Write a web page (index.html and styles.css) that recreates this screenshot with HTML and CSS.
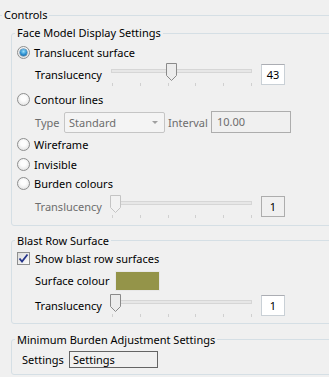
FILE: index.html
```html
<!DOCTYPE html>
<html>
<head>
  <title>Controls</title>
  <meta charset="UTF-8">
  <meta name="viewport" content="width=device-width, initial-scale=1">
  <link rel="stylesheet" href="styles.css">
</head>
<body>
  <fieldset class="group outer">
    <legend>Controls</legend>

    <fieldset class="group face">
      <legend>Face Model Display Settings</legend>

      <div class="opt first"><span class="radio on"></span>Translucent surface</div>
      <div class="slide-row">
        <span class="lbl w-slide">Translucency</span>
        <div class="slider">
          <div class="track"></div>
          <div class="ticks"><i></i><i></i><i></i><i></i><i></i><i></i></div>
          <svg class="thumb" style="left: 55px" width="12" height="19" viewBox="0 0 12 19"><path d="M0.5 0.5H10.5V12.5L5.5 17.5L0.5 12.5Z" fill="#ececec" stroke="#8a8a8a"/></svg>
        </div>
        <span class="num">43</span>
      </div>

      <div class="opt gap"><span class="radio"></span>Contour lines</div>
      <div class="type-row">
        <span class="lbl off w-type">Type</span>
        <div class="combo">Standard<span class="arrow"></span></div>
        <span class="off w-int">Interval</span>
        <span class="field off">10.00</span>
      </div>

      <div class="opt tight after-type"><span class="radio"></span>Wireframe</div>
      <div class="opt tight"><span class="radio"></span>Invisible</div>
      <div class="opt tight"><span class="radio"></span>Burden colours</div>
      <div class="slide-row">
        <span class="lbl off w-slide">Translucency</span>
        <div class="slider">
          <div class="track"></div>
          <div class="ticks"><i></i><i></i><i></i><i></i><i></i><i></i></div>
          <svg class="thumb" style="left: -1px" width="12" height="19" viewBox="0 0 12 19"><path d="M0.5 0.5H10.5V12.5L5.5 17.5L0.5 12.5Z" fill="#f2f2f2" stroke="#c4c4c4"/></svg>
        </div>
        <span class="num off">1</span>
      </div>
    </fieldset>

    <fieldset class="group blast">
      <legend>Blast Row Surface</legend>
      <div class="opt first">
        <span class="check"><svg width="11" height="11" viewBox="0 0 11 11"><path d="M1.5 5.5L4 8.5L9.5 1.5" fill="none" stroke="#25348a" stroke-width="1.8"/></svg></span>
        Show blast row surfaces
      </div>
      <div class="colour-row">
        <span class="lbl w-colour">Surface colour</span>
        <span class="swatch"></span>
      </div>
      <div class="slide-row">
        <span class="lbl w-slide">Translucency</span>
        <div class="slider">
          <div class="track"></div>
          <div class="ticks"><i></i><i></i><i></i><i></i><i></i><i></i></div>
          <svg class="thumb" style="left: -1px" width="12" height="19" viewBox="0 0 12 19"><path d="M0.5 0.5H10.5V12.5L5.5 17.5L0.5 12.5Z" fill="#ececec" stroke="#8a8a8a"/></svg>
        </div>
        <span class="num">1</span>
      </div>
    </fieldset>

    <fieldset class="group burden">
      <legend>Minimum Burden Adjustment Settings</legend>
      <div class="settings-row">
        <span class="lbl w-set">Settings</span>
        <span class="plain">Settings</span>
      </div>
    </fieldset>
  </fieldset>
</body>
</html>
```

FILE: styles.css
```css
html, body {
  margin: 0;
  overflow: hidden;
}
body {
  font-family: "Noto Sans", Arial, sans-serif;
  font-size: 11px;
  color: #000;
  background: #f0f0f0;
  width: 329px;
  height: 377px;
}
.group {
  border: 1px solid #d5dfe5;
  border-radius: 3px;
  min-width: 0;
}
.group legend {
  line-height: 14px;
  padding: 0 2px;
}
.outer {
  margin: 8px -20px 0 -3px;
  padding: 4px 0 12px 13px;
}
.outer > legend {
  margin-left: -9px;
}
.face, .blast, .burden {
  margin: 0 -20px 0 0;
  padding: 0 0 7px 5px;
}
.face > legend, .blast > legend, .burden > legend {
  margin-left: -2px;
}
.blast {
  margin-top: 8px;
  padding-bottom: 6px;
}
.burden {
  margin-top: 9px;
  padding-bottom: 5px;
}

.opt {
  display: flex;
  align-items: center;
  height: 19px;
  white-space: nowrap;
}
.opt.first {
  margin-top: 3px;
}
.blast .opt.first {
  margin-top: 1px;
}
.opt.gap {
  margin-top: 4px;
}
.opt.tight {
  height: 19.5px;
}
.opt.after-type {
  margin-top: 2px;
}
.radio {
  width: 13px;
  height: 13px;
  box-sizing: border-box;
  border-radius: 50%;
  border: 1px solid #8e8f8f;
  background: radial-gradient(circle at 50% 40%, #fdfdfd 30%, #d9d9d9 100%);
  margin-right: 4px;
  position: relative;
  flex: none;
}
.radio.on::after {
  content: "";
  position: absolute;
  left: 2px;
  top: 2px;
  width: 7px;
  height: 7px;
  border-radius: 50%;
  background: radial-gradient(circle at 50% 35%, #9be0fb 0%, #2b8fd0 55%, #0c4c82 100%);
  box-shadow: 0 0 0 0.5px #3a6d92;
}
.check {
  width: 13px;
  height: 13px;
  box-sizing: border-box;
  border: 1px solid #8e8f8f;
  background: linear-gradient(135deg, #dcdcdc, #fbfbfb);
  margin-right: 5px;
  display: flex;
  align-items: center;
  justify-content: center;
  flex: none;
}

.lbl {
  flex: none;
  padding-left: 18px;
  box-sizing: border-box;
  white-space: nowrap;
}
.off {
  color: #6d6d6d;
}
.w-slide { width: 94px; }
.w-type { width: 47px; }
.w-colour { width: 98px; }
.w-int { width: 43px; flex: none; white-space: nowrap; }
.w-set { width: 52px; padding-left: 5px; }

.slide-row {
  display: flex;
  align-items: flex-start;
  height: 22px;
  margin-top: 2px;
}
.blast .slide-row {
  margin-top: 3px;
}
.slide-row .lbl {
  line-height: 22px;
}
.slider {
  position: relative;
  width: 141px;
  height: 23px;
  margin-top: -1px;
  flex: none;
}
.track {
  margin-top: 6px;
  height: 4px;
  box-sizing: border-box;
  border: 1px solid #d6d6d6;
  background: #e7e7e7;
}
.ticks {
  display: flex;
  justify-content: space-between;
  margin-top: 10px;
  padding-left: 1px;
}
.ticks i {
  width: 1px;
  height: 3px;
  background: #d0d0d0;
}
.thumb {
  position: absolute;
  top: 0;
}
.num {
  flex: none;
  width: 24px;
  height: 21px;
  box-sizing: border-box;
  margin-left: 9px;
  border: 1px solid #c9d0d6;
  border-top-color: #abadb3;
  background: #fff;
  text-align: center;
  line-height: 19px;
}
.num.off {
  background: #f0f0f0;
  border-color: #adadad;
  color: #000;
}

.type-row {
  display: flex;
  align-items: center;
  height: 22px;
  margin-top: 2px;
}
.combo {
  flex: none;
  width: 101px;
  height: 21px;
  box-sizing: border-box;
  border: 1px solid #c5c5c5;
  border-radius: 2px;
  background: #f4f4f4;
  color: #6d6d6d;
  padding-left: 4px;
  line-height: 19px;
  display: flex;
  justify-content: space-between;
  margin-right: 3px;
}
.arrow {
  width: 0;
  height: 0;
  border-left: 3px solid transparent;
  border-right: 3px solid transparent;
  border-top: 3px solid #a0a0a0;
  margin: 8px 6px 0 0;
}
.field {
  flex: none;
  width: 80px;
  height: 22px;
  box-sizing: border-box;
  border: 1px solid #adadad;
  padding-left: 5px;
  line-height: 20px;
}

.colour-row {
  display: flex;
  align-items: center;
  height: 22px;
  margin-top: 2px;
}
.swatch {
  width: 45px;
  height: 20px;
  box-sizing: border-box;
  background: #949449;
  border: 1px solid #e8e8e8;
  flex: none;
}

.settings-row {
  display: flex;
  align-items: center;
  height: 18px;
  margin-top: 4px;
}
.plain {
  width: 89px;
  height: 17px;
  box-sizing: border-box;
  border: 1px solid #646464;
  padding-left: 3px;
  line-height: 15px;
}
```
